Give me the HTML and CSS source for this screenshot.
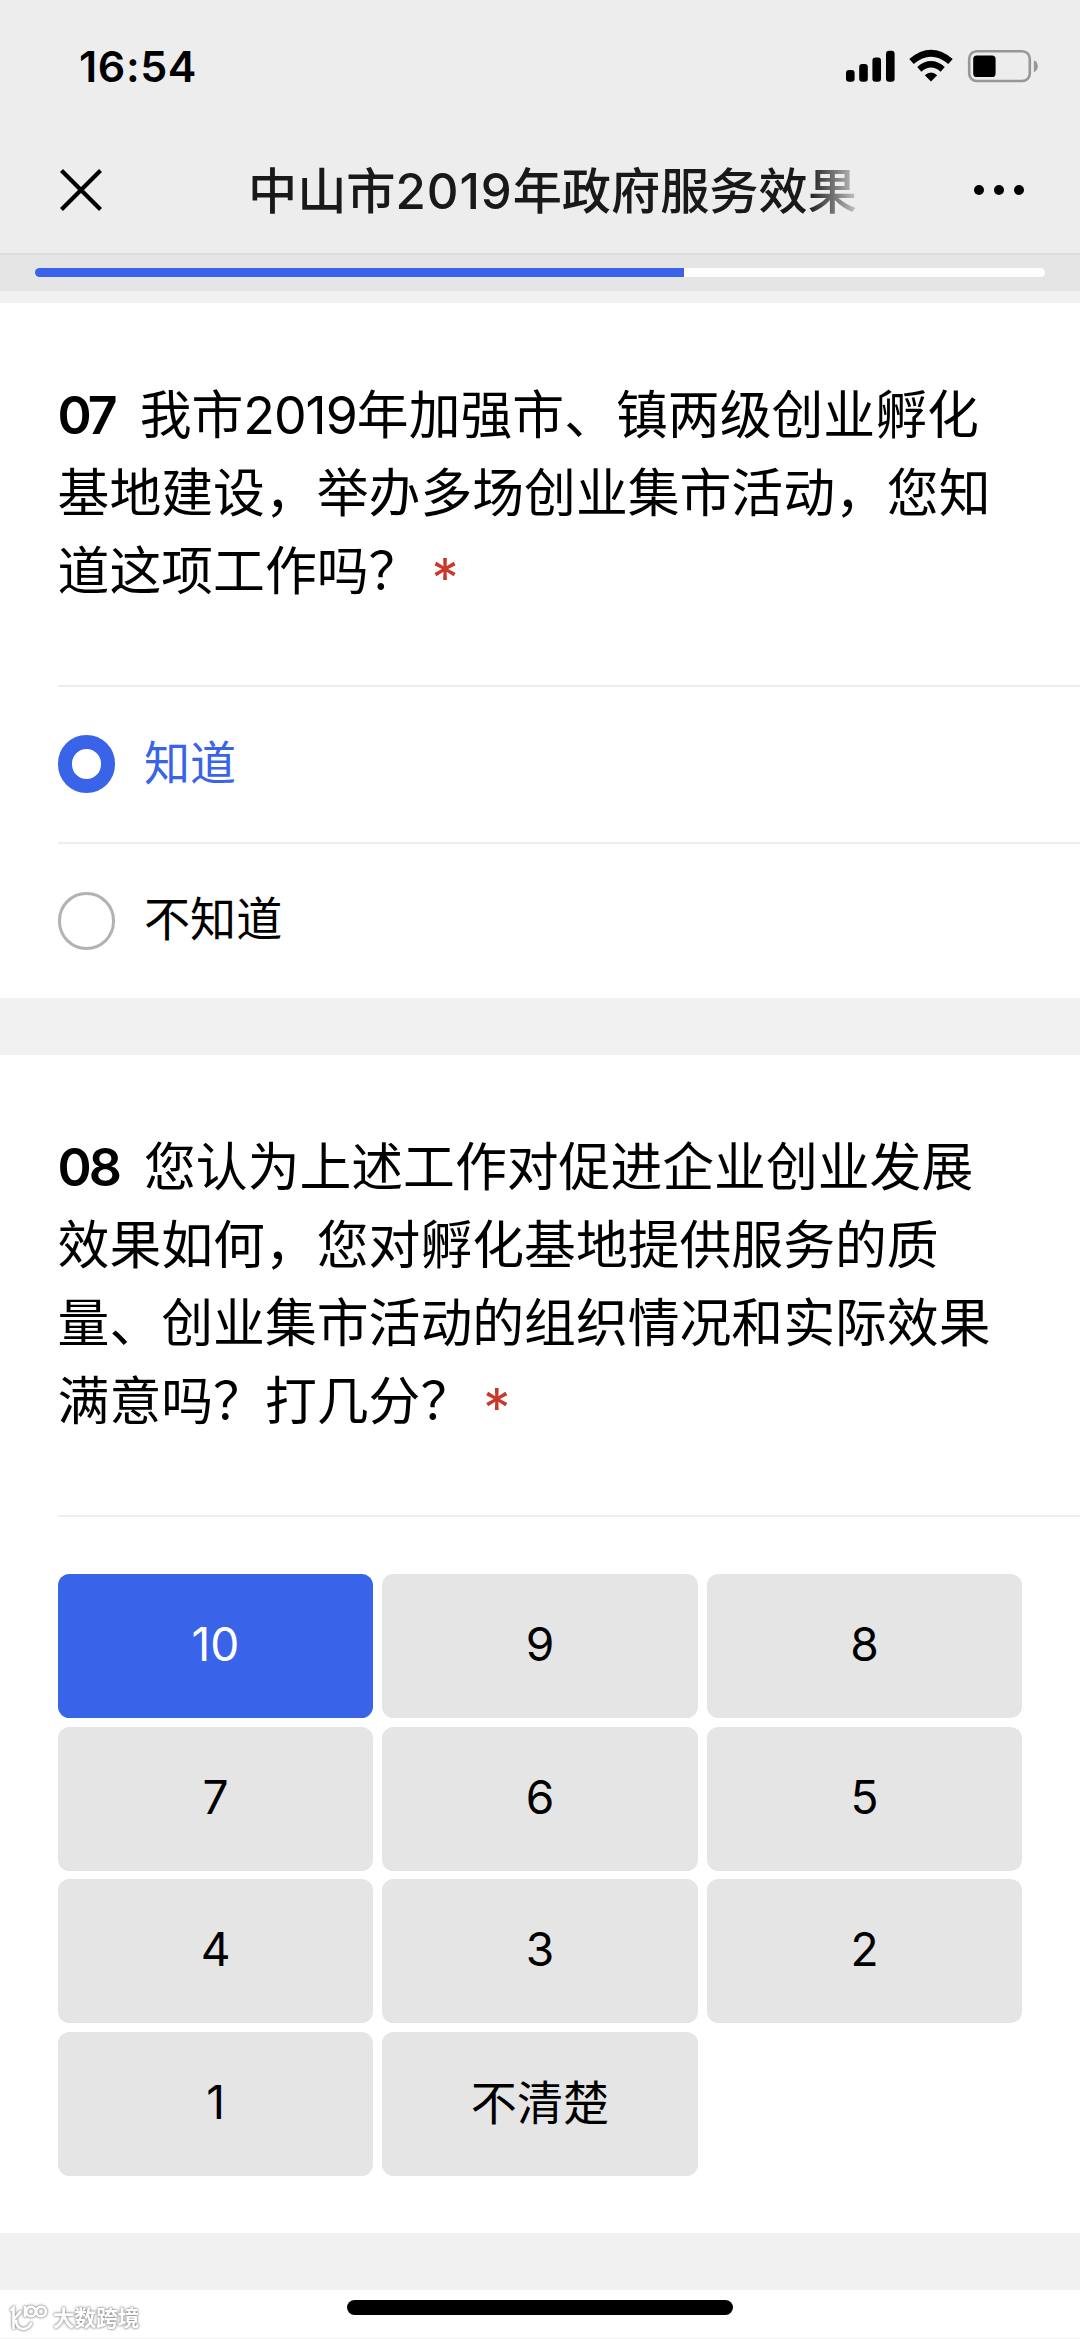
FILE: index.html
```html
<!DOCTYPE html>
<html lang="zh-CN">
<head>
  <meta charset="UTF-8">
  <title>中山市2019年政府服务效果</title>
  <link rel="stylesheet" href="styles.css">
</head>
<body>

  <header class="top">
    <div class="status-bar">
      <span class="time">16:54</span>
      <svg class="status-icons" width="194" height="34" viewBox="0 0 194 34">
        <!-- signal -->
        <rect x="1" y="21" width="8.6" height="11.7" rx="3"/>
        <rect x="14.2" y="15" width="8.6" height="17.7" rx="3"/>
        <rect x="27.4" y="8.5" width="8.6" height="24.2" rx="3"/>
        <rect x="41" y="1.8" width="8.6" height="30.9" rx="3"/>
        <!-- wifi -->
        <path d="M66.5 12.5Q86 -4 105.5 12.5" fill="none" stroke="#000" stroke-width="6.8"/>
        <path d="M74.3 20.3Q86 10.2 97.7 20.3" fill="none" stroke="#000" stroke-width="6.4"/>
        <path d="M79.8 26.3Q86 20.5 92.2 26.3L86 32.5Z"/>
        <!-- battery -->
        <rect x="124.2" y="2.2" width="60.6" height="29.8" rx="7.5" fill="none" stroke="#979797" stroke-width="2.6"/>
        <rect x="128.2" y="6.4" width="22.4" height="21.6" rx="3.6"/>
        <path d="M188.8 11.2q4 1.8 4 6t-4 6z" fill="#979797"/>
      </svg>
    </div>
    <div class="nav-bar">
      <svg class="close" width="42" height="42" viewBox="0 0 42 42">
        <path d="M1.5 1.5L40.5 40.5M40.5 1.5L1.5 40.5" stroke="#000" stroke-width="4.2"/>
      </svg>
      <h1 class="title">中山市<span class="num">2019</span>年政府服务效果</h1>
      <div class="more"><i></i><i></i><i></i></div>
    </div>
  </header>

  <div class="progress">
    <div class="track"><div class="bar" style="width:64.3%"></div></div>
  </div>

  <main>
    <section class="question">
      <h2><b>07</b>我市<span class="num">2019</span>年加强市、镇两级创业孵化<br>基地建设，举办多场创业集市活动，您知<br>道这项工作吗？<em>*</em></h2>
      <div class="option checked"><span class="radio"></span><span class="label">知道</span></div>
      <div class="option"><span class="radio"></span><span class="label">不知道</span></div>
    </section>

    <section class="question">
      <h2><b>08</b>您认为上述工作对促进企业创业发展<br>效果如何，您对孵化基地提供服务的质<br>量、创业集市活动的组织情况和实际效果<br>满意吗？打几分？<em>*</em></h2>
      <div class="scores">
        <button class="active">10</button>
        <button>9</button>
        <button>8</button>
        <button>7</button>
        <button>6</button>
        <button>5</button>
        <button>4</button>
        <button>3</button>
        <button>2</button>
        <button>1</button>
        <button class="unsure">不清楚</button>
      </div>
    </section>
  </main>

  <footer class="home">
    <div class="home-indicator"></div>
    <div class="watermark">
      <svg width="40" height="28" viewBox="0 0 40 28" fill="none" stroke="#fff" stroke-width="2.6">
        <path d="M1.5 6.5L4.5 4V25M12 7L5.5 14.5M7 15.5Q7 24.5 14 25Q20 25 22.5 18.5"/>
        <path d="M16 2V13"/>
        <circle cx="22" cy="7.5" r="4.8"/>
        <circle cx="32" cy="7.5" r="4.8"/>
      </svg>
      <span>大数跨境</span>
    </div>
  </footer>

</body>
</html>
```

FILE: styles.css
```css
* {
  box-sizing: border-box;
}

body {
  margin: 0;
  width: 1080px;
  height: 2339px;
  overflow: hidden;
  background: #f1f1f1;
  color: #000;
  font-family: Inter, "Noto Sans CJK SC", sans-serif;
}

/* header */
.top {
  height: 255px;
  background: #ededed;
  border-bottom: 2px solid #dcdcdc;
}

.status-bar {
  display: flex;
  justify-content: space-between;
  align-items: center;
  height: 132px;
  padding: 0 41px 0 79px;
}

.time {
  font-size: 43px;
  font-weight: 600;
  line-height: 50px;
  letter-spacing: 0.6px;
}

.nav-bar {
  display: flex;
  align-items: center;
  height: 116px;
  padding: 0 56px 0 60px;
}

.title {
  width: 613px;
  margin: 0 0 0 146px;
  padding-top: 1px;
  overflow: hidden;
  white-space: nowrap;
  color: #191919;
  font-size: 49.2px;
  font-weight: 500;
  line-height: 72px;
  -webkit-mask-image: linear-gradient(to right, #000 560px, transparent 620px);
  mask-image: linear-gradient(to right, #000 560px, transparent 620px);
}

.title .num {
  letter-spacing: 0.9px;
}

.more {
  display: flex;
  gap: 10px;
  margin-left: auto;
}

.more i {
  width: 10px;
  height: 10px;
  border-radius: 50%;
  background: #000;
}

.progress {
  height: 36px;
  padding: 13px 35px 0;
  background: #e5e5e5;
}

.track {
  height: 8.6px;
  border-radius: 5px;
  background: #fff;
  overflow: hidden;
}

.bar {
  height: 100%;
  background: #3963e8;
}

/* questions */
main {
  padding-top: 12px;
}

.question {
  background: #fff;
  margin-bottom: 57px;
  padding-left: 57.6px;
}

h2 {
  margin: 0;
  padding: 74.2px 0 74.4px;
  font-size: 51.84px;
  font-weight: 400;
  line-height: 77.8px;
  white-space: nowrap;
}

h2 .num {
  letter-spacing: -1px;
}

h2 b {
  font-weight: 600;
  margin-right: 25px;
  letter-spacing: -3px;
}

/* required mark */
h2 em {
  margin-left: 11px;
  color: #c9392b;
  font-size: 54px;
  font-style: normal;
  font-weight: 400;
  line-height: 1;
  vertical-align: -7px;
}

.option {
  display: flex;
  align-items: center;
  gap: 28.8px;
  height: 156.6px;
  border-top: 2px solid #eee;
  font-size: 46.08px;
}

.option.checked {
  color: #3963e8;
}

.label {
  padding-bottom: 9px;
}

.radio {
  width: 57.6px;
  height: 57.6px;
  border: 3px solid #b2b2b2;
  border-radius: 50%;
}

.checked .radio {
  border: 14.4px solid #3963e8;
}

.scores {
  display: grid;
  grid-template-columns: repeat(3, 1fr);
  grid-auto-rows: 144px;
  gap: 8.64px;
  padding: 57px 57.6px 57.6px 0;
  border-top: 2px solid #eee;
}

.scores button {
  padding: 0 0 4px;
  border: none;
  border-radius: 11.5px;
  background: #e5e5e5;
  color: #000;
  font-family: inherit;
  font-size: 46.08px;
  font-weight: 400;
  cursor: pointer;
}

.scores .active {
  background: #3963e8;
  color: #fff;
}

.scores .unsure {
  padding-bottom: 8px;
}

/* bottom */
.home {
  position: relative;
  height: 48px;
  padding-top: 10px;
  background: #fff;
}

.home-indicator {
  width: 386px;
  height: 15px;
  margin: 0 auto;
  border-radius: 8px;
  background: #000;
}

.watermark {
  position: absolute;
  left: 9px;
  top: 13px;
  display: flex;
  align-items: center;
  gap: 4px;
  color: #fff;
  font-size: 21.6px;
  font-weight: 700;
  line-height: 30px;
  filter: drop-shadow(0 0 1px #888) drop-shadow(0 0 1px #bbb);
}
```
